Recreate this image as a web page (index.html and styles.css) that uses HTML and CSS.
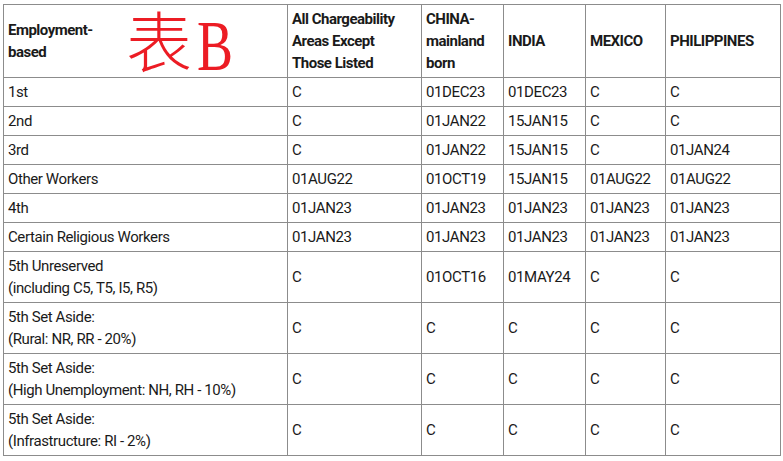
FILE: index.html
```html
<!DOCTYPE html>
<html lang="en">
<head>
<meta charset="utf-8">
<link rel="stylesheet" href="styles.css">
</head>
<body>
<div class="wrap">
  <table class="vb">
    <colgroup>
      <col class="c1"><col class="c2"><col class="c3"><col class="c4"><col class="c5"><col class="c6">
    </colgroup>
    <thead>
      <tr>
        <th>Employment-<br>based</th>
        <th>All Chargeability<br>Areas Except<br>Those Listed</th>
        <th>CHINA-<br>mainland<br>born</th>
        <th>INDIA</th>
        <th>MEXICO</th>
        <th>PHILIPPINES</th>
      </tr>
    </thead>
    <tbody>
      <tr><td>1st</td><td>C</td><td>01DEC23</td><td>01DEC23</td><td>C</td><td>C</td></tr>
      <tr><td>2nd</td><td>C</td><td>01JAN22</td><td>15JAN15</td><td>C</td><td>C</td></tr>
      <tr><td>3rd</td><td>C</td><td>01JAN22</td><td>15JAN15</td><td>C</td><td>01JAN24</td></tr>
      <tr><td>Other Workers</td><td>01AUG22</td><td>01OCT19</td><td>15JAN15</td><td>01AUG22</td><td>01AUG22</td></tr>
      <tr><td>4th</td><td>01JAN23</td><td>01JAN23</td><td>01JAN23</td><td>01JAN23</td><td>01JAN23</td></tr>
      <tr><td>Certain Religious Workers</td><td>01JAN23</td><td>01JAN23</td><td>01JAN23</td><td>01JAN23</td><td>01JAN23</td></tr>
      <tr><td>5th Unreserved<br>(including C5, T5, I5, R5)</td><td>C</td><td>01OCT16</td><td>01MAY24</td><td>C</td><td>C</td></tr>
      <tr><td>5th Set Aside:<br>(Rural: NR, RR - 20%)</td><td>C</td><td>C</td><td>C</td><td>C</td><td>C</td></tr>
      <tr><td>5th Set Aside:<br>(High Unemployment: NH, RH - 10%)</td><td>C</td><td>C</td><td>C</td><td>C</td><td>C</td></tr>
      <tr><td>5th Set Aside:<br>(Infrastructure: RI - 2%)</td><td>C</td><td>C</td><td>C</td><td>C</td><td>C</td></tr>
    </tbody>
  </table>
  <div class="label"><span class="han">表</span><span class="latin">B</span></div>
</div>
</body>
</html>
```
FILE: styles.css
```css
html, body {
  margin: 0;
  padding: 0;
  background: #ffffff;
}
body {
  padding: 4px 0 0 3px;
  font-family: Roboto, "Liberation Sans", sans-serif;
  color: #1a1a1a;
}
.wrap {
  position: relative;
  width: 777px;
}
.vb {
  border-collapse: collapse;
  table-layout: fixed;
  width: 777px;
  font-size: 15px;
  line-height: 22px;
  letter-spacing: -0.4px;
}
.c1 { width: 284px; }
.c2 { width: 134px; }
.c3 { width: 82px; }
.c4 { width: 82px; }
.c5 { width: 80px; }
.c6 { width: 115px; }
.vb th, .vb td {
  border: 1px solid #8c8c8c;
  padding: 3px 4px;
  text-align: left;
  vertical-align: middle;
  white-space: nowrap;
}
.vb th {
  font-weight: bold;
  font-size: 15px;
  letter-spacing: -0.5px;
}
.vb tbody tr {
  height: 29px;
}
.label {
  position: absolute;
  left: 123px;
  top: 8px;
  display: flex;
  align-items: flex-start;
  color: #ec1c24;
  letter-spacing: 0;
}
.han {
  font-family: "Liberation Serif", "Noto Sans CJK SC", serif;
  font-weight: 300;
  font-size: 66px;
  line-height: 66px;
}
.latin {
  font-family: "Liberation Serif", serif;
  font-size: 72px;
  line-height: 72px;
  margin-top: -2px;
  margin-left: 5px;
  display: inline-block;
  transform: scaleX(0.75);
  transform-origin: left top;
}
```
